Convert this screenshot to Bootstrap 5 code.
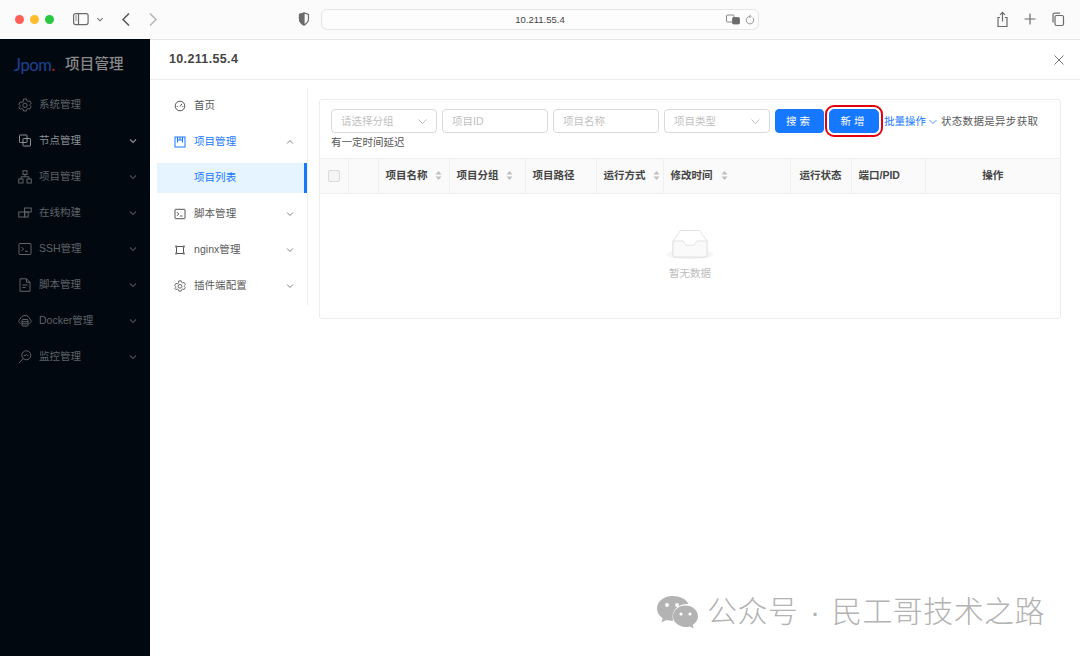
<!DOCTYPE html>
<html lang="zh-CN">
<head>
<meta charset="utf-8">
<title>Jpom</title>
<link href="https://cdn.jsdelivr.net/npm/bootstrap@5.3.0/dist/css/bootstrap.min.css" rel="stylesheet">
<style>
html,body{height:656px;overflow:hidden;background:#fff}
body{font-family:"Liberation Sans","Noto Sans CJK SC",sans-serif;font-size:10.5px;color:#595959;position:relative}
.tb{height:39px;background:#fbfbfb;flex:none}
.lights{padding-left:15px;gap:6px}
.dot{width:9px;height:9px;border-radius:50%}
#d1{background:#ff5f57}#d2{background:#febc2e}#d3{background:#28c840}
.tb svg{fill:none;stroke:#6b6b6b;stroke-width:1.2;display:block}
.urlbox{position:absolute;left:321px;top:9px;width:438px;height:21px;border:1px solid #e6e6e6;border-radius:6px;background:#fdfdfd;font-size:9.5px;color:#444;line-height:20px;text-align:center}
.urlbox svg{position:absolute;top:4px}
.tbi{position:absolute}
.t-side{left:73px;top:12px}.t-caret{left:96px;top:16px}
.t-back{left:121px;top:12px;stroke-width:1.5!important;stroke:#555!important}
.t-fwd{left:148px;top:12px;stroke-width:1.5!important;stroke:#b5b5b5!important}
.t-shield{left:298px;top:12px}
.urlbox .u-tr{left:404px}.urlbox .u-re{left:423px;stroke:#888!important;stroke-width:.9!important}
.u-tr rect{stroke-width:.8}.u-fill{fill:#6b6b6b}
.t-share{left:996px;top:11px}.t-plus{left:1024px;top:13px}.t-tabs{left:1051px;top:12px}
.shell{height:617px}
.side{width:150px;background:#010810;flex:none;color:#6d7176}
.brand{height:48px;padding:4px 0 0 14px;gap:8px}
.jlogo{font-family:"Lato",sans-serif;font-weight:400;font-size:16.5px;color:#1f4396;letter-spacing:-.4px;width:43px}
.jlogo b{color:#8f1d1d}
.brandname{font-size:14.5px;color:#8a8a8a;font-weight:500;letter-spacing:.2px}
.sitem{height:36px;padding:0 13px 0 18px;font-size:10.5px;color:#5f6367}
.sitem svg,.subm svg{fill:none;stroke:currentColor;stroke-width:1;flex:none}
.sitem .ic{width:14px;height:14px;margin-right:7px}
.sitem .chev{margin-left:auto;width:8px;height:8px;stroke-width:1.1;opacity:.75}
.sitem.on{color:#8c9094}
.sitem.on .chev{opacity:1}
.main{min-width:0;border-top:1px solid #e6e6e6}
.mhead{height:40px;padding:0 15px 0 19px;border-bottom:1px solid #ececec;flex:none}
.mtitle{font-size:12.5px;font-weight:700;color:#444;letter-spacing:.35px}
.mclose{fill:none;stroke:#777;stroke-width:1}
.subm{width:158px;height:217px;margin-top:8px;border-right:1px solid #ededed;padding-left:7px;flex:none}
.mi{height:36px;padding:0 13px 0 17px;font-size:10.5px;color:#595959;letter-spacing:.05px}
.mi .ic{width:12px;height:12px;margin-right:8px;color:#555}
.mi .chev{margin-left:auto;width:8px;height:8px;stroke-width:1;color:#808080}
.mi.act{color:#1677ff}
.mi.act .ic{color:#1677ff}
.mi.cur{background:#e6f4ff;color:#1677ff;border-right:3px solid #1677ff;height:30px;margin:3px 0;padding-left:37px;border-radius:0}
.sq{fill:#777;stroke:none}
.panel{width:742px;height:220px;margin:19px 0 0 11px;border:1px solid #ececec;border-radius:3px;flex:none}
.filters{padding:9px 0 0 11px;gap:5px;height:33px}
.fld{width:106px;height:24px;border:1px solid #d9d9d9;border-radius:4px;padding:0 9px;color:#bfbfbf;font-size:10.5px;line-height:22px;background:#fff;box-shadow:none}
.fld::placeholder{color:#bfbfbf}
.fsel{position:relative}
.fsel svg{position:absolute;right:9px;top:8px;width:9px;height:7px;fill:none;stroke:#bfbfbf;stroke-width:1}
.bluebtn{height:24px;width:49px;padding:0;font-size:10.5px;letter-spacing:3px;border-radius:4px;background:#1677ff;border-color:#1677ff;line-height:1}
.bluebtn.wide{width:50px}
.redring{outline:2px solid #e3000f;outline-offset:2px;border-radius:5px}
.lineh{line-height:24px;color:#595959}
.lnk{color:#1677ff;white-space:nowrap;text-decoration:none}
.lnk svg{width:8px;height:6px;fill:none;stroke:#1677ff;stroke-width:.8;margin:0 1px 0 3px;vertical-align:0}
.statustx{letter-spacing:.32px}
.note{padding-left:11px;height:14px;margin-top:2px;line-height:14px;color:#555;margin-bottom:9px}
.grid{table-layout:fixed;width:740px;margin:0;font-size:10.5px;--bs-table-bg:transparent}
.grid th{background:#fafafa;height:35px;padding:0 7px;font-weight:700;color:#444;border-top:1px solid #f0f0f0;border-bottom:1px solid #f0f0f0;border-right:1px solid #f0f0f0;vertical-align:middle;white-space:nowrap}
.grid th:last-child{border-right:0;text-align:center}
.grid th.ctr{text-align:center;padding:0}
.grid th.boxcell{padding:0}
.sorter{display:inline-block;margin-left:7px;vertical-align:-1px}
.sorter svg{display:block;width:7px;height:9px;fill:#bfbfbf}
.cb{display:block;width:12px;height:12px;border:1px solid #d9d9d9;border-radius:2px;background:#f5f5f5;margin:0 auto;box-shadow:none}
.empty{height:124px;color:#bdbdbd;padding-top:35px}
.empty svg{display:block;width:46px;height:31px}
.empty span{margin-top:6px;font-size:10.5px}
.em-sh{fill:#f5f5f5}.em-a{fill:#fff;stroke:#e3e3e3}.em-b{fill:#fafafa;stroke:#e3e3e3}
.wm{position:absolute;left:656px;top:594px;gap:8px;color:#b3b3b3;font-size:30px;letter-spacing:.4px;word-spacing:3px;line-height:36px;font-weight:300;white-space:nowrap}
.wm svg{width:43px;height:35px;fill:#b3b3b3;flex:none}
.eye{fill:#fff}
.c1{width:28px}.c2{width:30px}.c3{width:71px}.c4{width:76px}.c5{width:71px}.c6{width:67px}.c7{width:127px}.c8{width:61px}.c9{width:74px}.c10{width:135px}
</style>
</head>
<body>
<svg width="0" height="0" class="position-absolute">
<defs>
<symbol id="down" viewBox="0 0 8 8"><path d="M1 2.500 4 5.500 7 2.500"/></symbol>
<symbol id="up" viewBox="0 0 8 8"><path d="M1 5.500 4 2.500 7 5.500"/></symbol>
<symbol id="gear" viewBox="0 0 14 14"><path d="M5.600 1h2.800l.4 1.700 1.300.7 1.700-.5 1.400 2.400-1.200 1.200v1l1.200 1.200-1.400 2.400-1.700-.5-1.300.7-.4 1.700H5.600l-.4-1.700-1.300-.7-1.700.5L.8 9.900 2 8.700v-1L.8 6.300l1.400-2.400 1.700.5 1.300-.7z"/><circle cx="7" cy="7.300" r="2.200"/></symbol>
<symbol id="sort" viewBox="0 0 7 9"><path d="M3.500 0 6.500 3.500H.5zM3.500 9 .5 5.500h6z"/></symbol>
</defs>
</svg>

<div class="tb position-relative d-flex align-items-center">
  <div class="lights d-flex">
    <span class="dot" id="d1"></span><span class="dot" id="d2"></span><span class="dot" id="d3"></span>
  </div>
  <svg class="tbi t-side" width="16" height="14" viewBox="0 0 16 14"><rect x=".6" y="1.600" width="14.500" height="11" rx="2"/><path d="M5.500 1.600v11M2.300 4h1.500M2.300 6h1.500M2.300 8h1.500"/></svg>
  <svg class="tbi t-caret" width="8" height="7" viewBox="0 0 8 8"><path d="M1 2.500 4 5.500 7 2.500"/></svg>
  <svg class="tbi t-back" width="10" height="15" viewBox="0 0 10 15"><path d="M8 1.500 2 7.500l6 6"/></svg>
  <svg class="tbi t-fwd" width="10" height="15" viewBox="0 0 10 15"><path d="M2 1.500l6 6-6 6"/></svg>
  <svg class="tbi t-shield" width="12" height="14" viewBox="0 0 12 14"><path d="M6 1 1.500 2.500v4.300C1.500 10 4 12 6 13c2-1 4.500-3 4.500-6.200V2.500z"/><path class="u-fill" d="M6 1 1.500 2.500v4.300C1.500 10 4 12 6 13z"/></svg>
  <div class="urlbox">10.211.55.4
    <svg class="u-tr" width="15" height="12" viewBox="0 0 15 12"><rect x=".5" y="1" width="7.500" height="7" rx="1"/><rect class="u-fill" x="6.500" y="3.500" width="7" height="6.500" rx="1"/></svg>
    <svg class="u-re" width="10" height="12" viewBox="0 0 10 12"><path d="M7.800 3.800A3.700 3.700 0 1 1 5 2.500"/><path d="M4.600 .8 6 2.500 4.600 4"/></svg>
  </div>
  <svg class="tbi t-share" width="13" height="17" viewBox="0 0 13 17"><path d="M4 6.500H2v9h9v-9H9M6.500 10.500V1.500M4 3.800 6.500 1.300 9 3.800"/></svg>
  <svg class="tbi t-plus" width="12" height="12" viewBox="0 0 12 12"><path d="M6 .5v11M.5 6h11"/></svg>
  <svg class="tbi t-tabs" width="14" height="15" viewBox="0 0 14 15"><rect x="4" y="3.500" width="8.500" height="10" rx="1.500"/><path d="M2 10.500V3a1.800 1.800 0 0 1 1.800-1.800H9"/></svg>
</div>

<div class="shell d-flex">
  <aside class="side d-flex flex-column">
    <div class="brand d-flex align-items-center"><span class="jlogo">Jpom<b>.</b></span><span class="brandname">项目管理</span></div>
    <div class="sitem d-flex align-items-center"><svg class="ic" viewBox="0 0 14 14"><use href="#gear"/></svg>系统管理</div>
    <div class="sitem on d-flex align-items-center"><svg class="ic" viewBox="0 0 14 14"><rect x="1.500" y="1" width="7.500" height="7.500" rx=".6"/><rect x="5" y="4.500" width="7.500" height="7.500" rx=".6"/></svg>节点管理<svg class="chev"><use href="#down"/></svg></div>
    <div class="sitem d-flex align-items-center"><svg class="ic" viewBox="0 0 14 14"><rect x="5" y=".7" width="4" height="3.800"/><rect x=".7" y="9" width="4.300" height="4"/><rect x="9" y="9" width="4.300" height="4"/><path d="M7 4.500v2.300M3 9V6.800h8V9"/></svg>项目管理<svg class="chev"><use href="#down"/></svg></div>
    <div class="sitem d-flex align-items-center"><svg class="ic" viewBox="0 0 14 14"><rect x=".7" y="6" width="6" height="5"/><rect x="6.700" y="6" width="3.500" height="5"/><rect x="6.500" y="2" width="6.700" height="4"/></svg>在线构建<svg class="chev"><use href="#down"/></svg></div>
    <div class="sitem d-flex align-items-center"><svg class="ic" viewBox="0 0 14 14"><rect x="1" y="1.500" width="12" height="11" rx=".8"/><path d="M3.500 5 5.500 7 3.500 9M7 9.300h3"/></svg>SSH管理<svg class="chev"><use href="#down"/></svg></div>
    <div class="sitem d-flex align-items-center"><svg class="ic" viewBox="0 0 14 14"><path d="M2 .8h6.500L12 4.300v9H2zM8.500 .8v3.500H12M4.500 7h5M4.500 9.500h3"/></svg>脚本管理<svg class="chev"><use href="#down"/></svg></div>
    <div class="sitem d-flex align-items-center"><svg class="ic" viewBox="0 0 14 14"><path d="M2.800 9.500C.5 8.800.2 5.800 2.300 5 2.800 2.800 4.800 1.500 7 1.500S11.200 2.800 11.700 5c2.100.8 1.800 3.800-.5 4.500"/><rect x="4" y="5.500" width="6" height="6.500" rx=".6"/><path d="M4 7.700h6M4 9.800h6"/></svg>Docker管理<svg class="chev"><use href="#down"/></svg></div>
    <div class="sitem d-flex align-items-center"><svg class="ic" viewBox="0 0 14 14"><circle cx="8.300" cy="5.300" r="4.500"/><path d="M5 8.800 1 13M5.800 5.500h1.700l1-1.200 1 1.200h1"/></svg>监控管理<svg class="chev"><use href="#down"/></svg></div>
  </aside>

  <div class="main flex-grow-1 d-flex flex-column">
    <div class="mhead d-flex align-items-center justify-content-between">
      <span class="mtitle">10.211.55.4</span>
      <svg class="mclose" width="12" height="12" viewBox="0 0 12 12"><path d="M1.500 1.500l9 9M10.500 1.500l-9 9"/></svg>
    </div>
    <div class="d-flex align-items-start">
      <nav class="subm d-flex flex-column">
        <div class="mi d-flex align-items-center"><svg class="ic" viewBox="0 0 12 12"><circle cx="6" cy="6" r="4.800"/><path d="M6 6.500 8 3.800M2.800 6.500h1M8.300 6.500h1"/></svg>首页</div>
        <div class="mi act d-flex align-items-center"><svg class="ic" viewBox="0 0 12 12"><rect x="1" y="1" width="10" height="10"/><path d="M3.500 1v5.500M8.500 1v5.500M3.500 4h5M6 1v3"/></svg>项目管理<svg class="chev"><use href="#up"/></svg></div>
        <div class="mi cur d-flex align-items-center">项目列表</div>
        <div class="mi d-flex align-items-center"><svg class="ic" viewBox="0 0 12 12"><rect x="1" y="1.300" width="10" height="9.400" rx=".5"/><path d="M3 4.200 4.800 6 3 7.800M6 8h2.500"/></svg>脚本管理<svg class="chev"><use href="#down"/></svg></div>
        <div class="mi d-flex align-items-center"><svg class="ic" viewBox="0 0 12 12"><path d="M2.500 2.500h7M2.500 9.500h7M2.500 2.500v7M9.500 2.500v7"/><rect class="sq" x="1.200" y="1.500" width="2" height="2"/><rect class="sq" x="8.800" y="1.500" width="2" height="2"/><rect class="sq" x="1.200" y="8.500" width="2" height="2"/><rect class="sq" x="8.800" y="8.500" width="2" height="2"/></svg>nginx管理<svg class="chev"><use href="#down"/></svg></div>
        <div class="mi d-flex align-items-center"><svg class="ic" viewBox="0 0 14 14"><use href="#gear"/></svg>插件端配置<svg class="chev"><use href="#down"/></svg></div>
      </nav>

      <section class="panel bg-white">
        <div class="filters d-flex align-items-start">
          <div class="fld fsel">请选择分组<svg viewBox="0 0 9 7"><path d="M.5 1.500 4.500 5.500 8.500 1.500"/></svg></div>
          <input class="form-control fld" placeholder="项目ID" aria-label="项目ID">
          <input class="form-control fld" placeholder="项目名称" aria-label="项目名称">
          <div class="fld fsel">项目类型<svg viewBox="0 0 9 7"><path d="M.5 1.500 4.500 5.500 8.500 1.500"/></svg></div>
          <button type="button" class="btn btn-primary bluebtn">搜索</button>
          <button type="button" class="btn btn-primary bluebtn wide redring">新增</button>
          <div class="text-nowrap lineh"><a class="lnk" href="#">批量操作<svg viewBox="0 0 8 6"><path d="M.5 1 4 4.500 7.500 1"/></svg></a> <span class="statustx">状态数据是异步获取</span></div>
        </div>
        <div class="note">有一定时间延迟</div>
        <table class="table grid">
          <colgroup>
            <col class="c1"><col class="c2"><col class="c3"><col class="c4"><col class="c5"><col class="c6"><col class="c7"><col class="c8"><col class="c9"><col class="c10">
          </colgroup>
          <thead><tr>
            <th class="boxcell"><span class="cb"></span></th>
            <th></th>
            <th>项目名称<span class="sorter"><svg><use href="#sort"/></svg></span></th>
            <th>项目分组<span class="sorter"><svg><use href="#sort"/></svg></span></th>
            <th>项目路径</th>
            <th>运行方式<span class="sorter"><svg><use href="#sort"/></svg></span></th>
            <th>修改时间<span class="sorter ms-2"><svg><use href="#sort"/></svg></span></th>
            <th class="ctr">运行状态</th>
            <th>端口/PID</th>
            <th>操作</th>
          </tr></thead>
        </table>
        <div class="empty d-flex flex-column align-items-center">
          <svg viewBox="0 0 46 31"><ellipse class="em-sh" cx="23" cy="25.500" rx="23" ry="5"/><path class="em-a" d="M6 12 13.500 1.500h19L40 12v14a2 2 0 0 1-2 2H8a2 2 0 0 1-2-2z"/><path class="em-b" d="M6 12h9.500c1 0 1.500.8 1.700 1.800.3 1.500 1.300 2.400 2.800 2.400h6c1.500 0 2.500-.9 2.800-2.400.2-1 .7-1.800 1.700-1.800H40v14a2 2 0 0 1-2 2H8a2 2 0 0 1-2-2z"/></svg>
          <span>暂无数据</span>
        </div>
      </section>
    </div>
  </div>
</div>

<div class="wm d-flex align-items-center">
  <svg viewBox="0 0 43 35"><path d="M16 1C7.700 1 1 6.600 1 13.500c0 4 2.200 7.400 5.700 9.700L5.300 27.500l5-2.600c1.800.5 3.700.8 5.700.8l1.300-.1c-.5-1.400-.7-2.800-.7-4.200 0-6.900 6.500-12.400 14.400-12.400h1.300C30.700 4.200 23.900 1 16 1z"/><path d="M42 21.300c0-5.900-5.800-10.700-12.500-10.700S17 15.400 17 21.300 22.800 32 29.500 32c1.500 0 2.900-.2 4.200-.6l4 2.200-1.100-3.600c3.300-2 5.400-5.100 5.400-8.700z"/><circle class="eye" cx="11" cy="10" r="1.900"/><circle class="eye" cx="21" cy="10" r="1.900"/><circle class="eye" cx="25" cy="19" r="1.600"/><circle class="eye" cx="34" cy="19" r="1.600"/></svg>
  <span>公众号 · 民工哥技术之路</span>
</div>
</body>
</html>
